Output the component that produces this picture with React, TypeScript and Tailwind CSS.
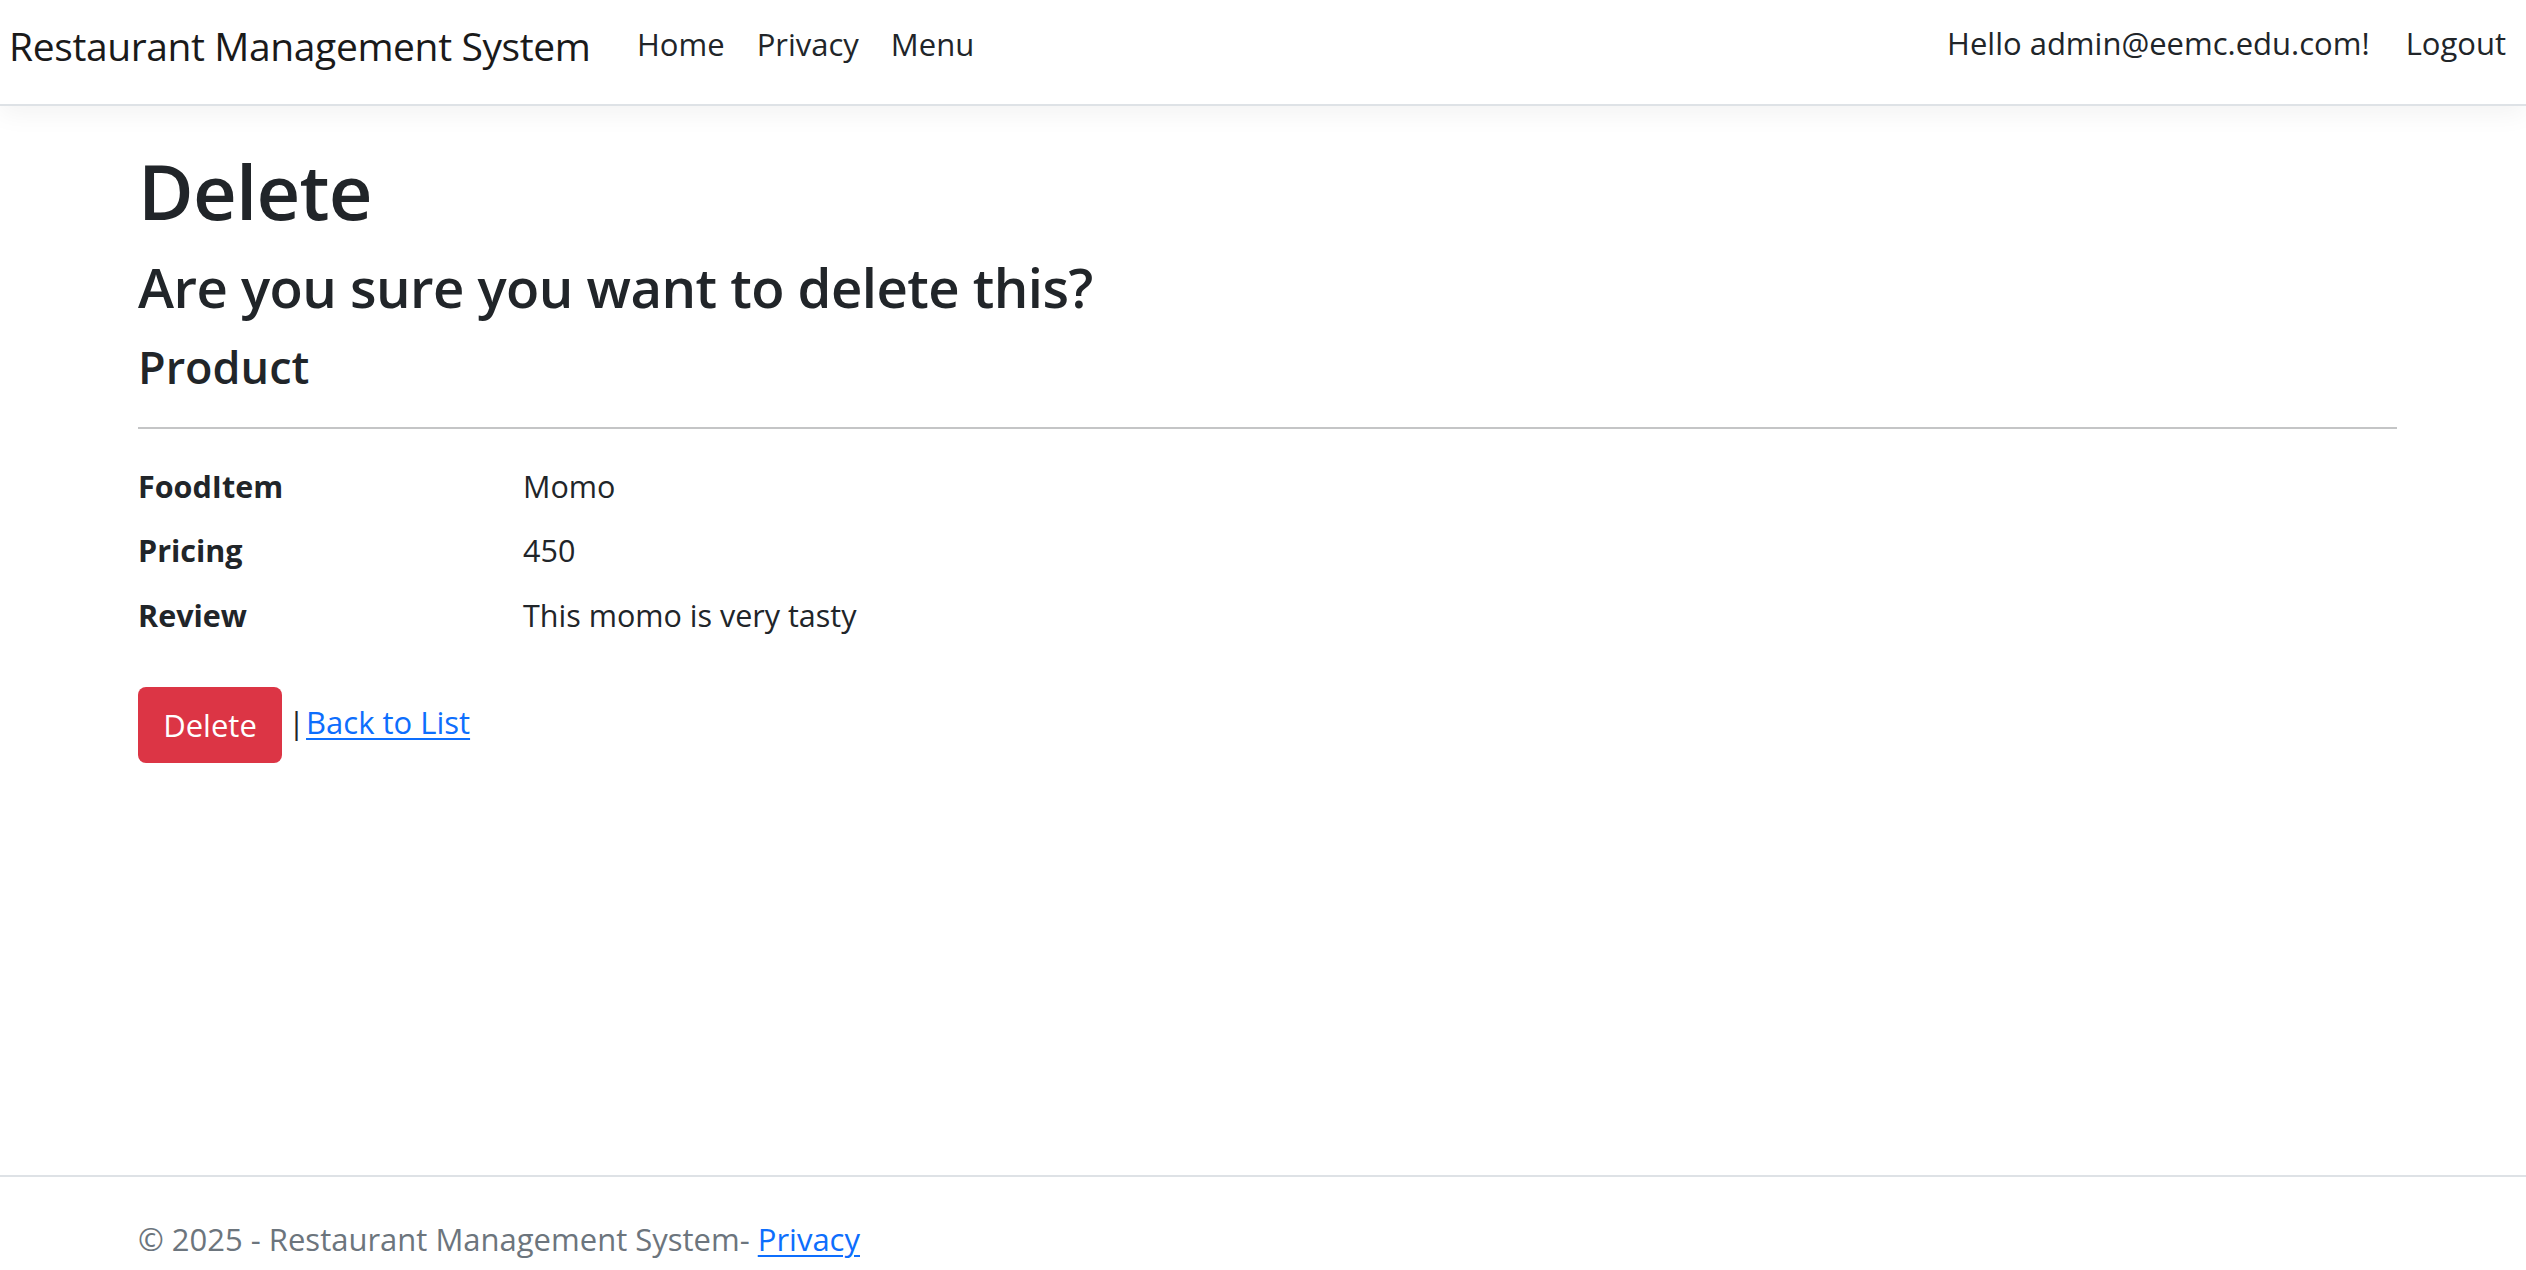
export default function App() {
  const details = [
    { label: "FoodItem", value: "Momo" },
    { label: "Pricing", value: "450" },
    { label: "Review", value: "This momo is very tasty" },
  ];

  return (
    <div className="min-h-screen flex flex-col bg-white text-[#212529] font-['Open_Sans',sans-serif]">
      {/* Navbar */}
      <header className="h-[106px] shrink-0 flex items-start border-b-2 border-[#dee2e6] bg-white shadow-[0_8px_24px_rgba(0,0,0,0.05)] relative z-10">
        <a className="w-[637px] shrink-0 pl-[9px] mt-[26px] text-[39px] leading-none text-[#1a1a1a] tracking-[-0.01em] whitespace-nowrap">
          Restaurant Management System
        </a>
        <nav className="mt-[29px] flex gap-[32px] text-[31px] leading-none">
          <a>Home</a>
          <a>Privacy</a>
          <a>Menu</a>
        </nav>
        <div className="ml-auto mr-[20px] mt-[28px] flex gap-[36px] text-[31px] leading-none">
          <span>Hello admin@eemc.edu.com!</span>
          <a>Logout</a>
        </div>
      </header>

      {/* Main */}
      <main className="flex-1 pl-[138px] pr-[129px]">
        <h1 className="mt-[47px] text-[76px] leading-none font-semibold tracking-[-0.01em]">Delete</h1>
        <h2 className="mt-[31px] text-[54.5px] leading-none font-semibold tracking-[-0.01em]">
          Are you sure you want to delete this?
        </h2>
        <h3 className="mt-[29px] text-[45px] leading-none font-semibold">Product</h3>
        <hr className="mt-[38px] h-[2px] border-0 bg-[#c4c5c6]" />

        <dl className="mt-[33px] grid grid-cols-[385px_1fr] gap-y-[16px] text-[30.5px] leading-[48.5px]">
          {details.map((d) => (
            <div key={d.label} className="contents">
              <dt className="font-bold">{d.label}</dt>
              <dd>{d.value}</dd>
            </div>
          ))}
        </dl>

        <div className="mt-[48px] flex items-start">
          <button className="w-[144px] h-[76px] rounded-[8px] bg-[#dc3545] text-white text-[31px] leading-none flex items-center justify-center">
            Delete
          </button>
          <span className="ml-[6px] mt-[20px] text-[31px] leading-none">|</span>
          <a className="ml-[1px] mt-[20px] text-[31px] leading-none text-[#0d6efd] underline decoration-2 underline-offset-[4px]">
            Back to List
          </a>
        </div>
      </main>

      {/* Footer */}
      <footer className="h-[95px] shrink-0 border-t-2 border-[#dee2e6] px-[138px] pt-[47px] text-[31px] leading-none text-[#6c757d]">
        © 2025 - Restaurant Management System-{" "}
        <a className="text-[#0d6efd] underline decoration-2 underline-offset-[4px]">Privacy</a>
      </footer>
    </div>
  );
}
